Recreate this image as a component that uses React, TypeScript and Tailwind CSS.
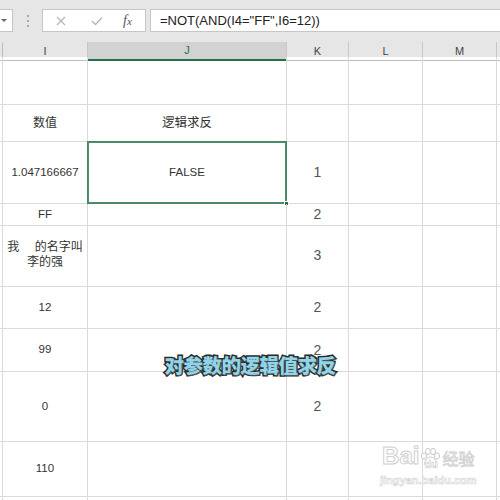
import React from "react"

const COLS = "grid grid-cols-[3px_85px_199px_62px_74px_74px_1fr]"
const FONT = "font-['Liberation_Sans','Noto_Sans_CJK_SC',sans-serif]"

type Row = { h: string; i?: React.ReactNode; j?: string; k?: string; sel?: boolean; cjk?: boolean }

const rows: Row[] = [
  { h: "h-[48px]" },
  { h: "h-[37px]", i: "数值", j: "逻辑求反", cjk: true },
  { h: "h-[62px]", i: "1.047166667", j: "FALSE", k: "1", sel: true },
  { h: "h-[20px]", i: "FF", k: "2" },
  {
    h: "h-[63px]",
    cjk: true,
    i: (
      <span className="block leading-[15px]">
        <span className="whitespace-pre">{"我\u3000 的名字叫"}</span>
        <br />
        李的强
      </span>
    ),
    k: "3",
  },
  { h: "h-[42px]", i: "12", k: "2" },
  { h: "h-[43px]", i: "99", k: "2" },
  { h: "h-[70px]", i: "0", k: "2" },
  { h: "h-[55px]", i: "110" },
  { h: "h-[20px]" },
]

const cell = "border-r border-b border-[#dadada] flex items-center justify-center text-center"

function Paw() {
  return (
    <svg width="22" height="22" viewBox="0 0 22 22" fill="#fff" stroke="#c9c9c9" strokeWidth="1">
      <ellipse cx="5" cy="9" rx="2.5" ry="3.2" />
      <ellipse cx="9" cy="4.5" rx="2.5" ry="3.2" />
      <ellipse cx="14" cy="4.5" rx="2.5" ry="3.2" />
      <ellipse cx="18" cy="9" rx="2.5" ry="3.2" />
      <path d="M11.5 10 C7 10 5 16 6 18 C7 20 9.5 19 11.5 19 C13.5 19 16 20 17 18 C18 16 16 10 11.5 10 Z" />
    </svg>
  )
}

export default function App() {
  return (
    <div className={`relative w-[500px] h-[500px] overflow-hidden bg-white ${FONT}`}>
      {/* formula bar */}
      <div className="flex h-[42px] items-start bg-[#e6e6e6] pt-[9px]">
        <div className="flex h-[23px] w-[13px] items-center border border-l-0 border-[#c6c6c6] bg-white pl-[1px]">
          <span className="block h-0 w-0 border-x-[3px] border-t-[3px] border-x-transparent border-t-[#666]" />
        </div>
        <div className="flex h-[23px] w-[29px] flex-col items-center justify-center gap-[3px]">
          <span className="h-[2px] w-[2px] bg-[#a8a8a8]" />
          <span className="h-[2px] w-[2px] bg-[#a8a8a8]" />
          <span className="h-[2px] w-[2px] bg-[#a8a8a8]" />
        </div>
        <div className="flex h-[23px] w-[104px] items-center border border-[#c6c6c6] bg-white">
          <svg className="ml-[13px]" width="10" height="10" viewBox="0 0 10 10" stroke="#b5b5b5" strokeWidth="1.2">
            <path d="M1 1 L9 9 M9 1 L1 9" />
          </svg>
          <svg className="ml-[25px]" width="12" height="10" viewBox="0 0 12 10" fill="none" stroke="#b5b5b5" strokeWidth="1.3">
            <path d="M1 5 L4.5 8.5 L11 1.5" />
          </svg>
          <span className="ml-[20px] font-['Liberation_Serif',serif] text-[14px] italic text-[#555]">
            f<span className="text-[11px]">x</span>
          </span>
        </div>
        <div className="ml-[4px] flex h-[23px] flex-1 items-center border border-r-0 border-[#c6c6c6] bg-white pl-[9px] text-[13px] text-[#222]">
          =NOT(AND(I4="FF",I6=12))
        </div>
      </div>

      {/* column headers */}
      <div className={`${COLS} h-[15px] bg-[#e6e6e6] text-[11px] text-[#444]`}>
        <div className="border-r border-b border-[#bdbdbd]" />
        <div className="flex items-center justify-center border-r border-b border-[#c8c8c8] border-b-[#bdbdbd]">I</div>
        <div className="flex items-center justify-center border-r border-b-2 border-[#c8c8c8] border-b-[#217346] bg-[#d2d2d2] text-[#217346]">J</div>
        <div className="flex items-center justify-center border-r border-b border-[#c8c8c8] border-b-[#bdbdbd]">K</div>
        <div className="flex items-center justify-center border-r border-b border-[#c8c8c8] border-b-[#bdbdbd]">L</div>
        <div className="flex items-center justify-center border-r border-b border-[#c8c8c8] border-b-[#bdbdbd]">M</div>
        <div className="border-b border-[#bdbdbd]" />
      </div>

      {/* rows */}
      {rows.map((r, idx) => (
        <div key={idx} className={`${COLS} ${r.h} text-[#333]`}>
          <div className="border-r border-b border-[#dadada]" />
          <div className={`${cell} ${r.cjk ? "text-[12px]" : "text-[11.5px]"}`}>{r.i}</div>
          <div className={`${cell} relative ${r.cjk ? "text-[12.5px]" : "text-[11.5px]"}`}>
            {r.j}
            {r.sel && (
              <>
                <span className="absolute -left-px -top-px right-[-1px] bottom-[-1px] border-2 border-[#217346]/80" />
                <span className="absolute right-[-3px] bottom-[-3px] h-[5px] w-[5px] border border-white bg-[#217346]" />
              </>
            )}
          </div>
          <div className={`${cell} text-[14px] text-[#555]`}>{r.k}</div>
          <div className={cell} />
          <div className={cell} />
          <div className="border-b border-[#dadada]" />
        </div>
      ))}

      {/* caption overlay */}
      <div className="absolute left-0 right-0 top-[352px] text-center font-['Noto_Sans_CJK_SC',sans-serif] text-[19.5px] font-black leading-[26px] tracking-[-0.5px] text-[#8fd5e9] [-webkit-text-stroke:3px_#2b2b2b] [paint-order:stroke_fill] [text-shadow:1px_1px_0_#555]">
        对参数的逻辑值求反
      </div>

      {/* watermark */}
      <div className="absolute left-[380px] top-[444px] flex flex-col items-center">
        <div className="flex items-end">
          <span className="font-['Liberation_Sans',sans-serif] text-[24px] font-bold leading-[24px] text-white [-webkit-text-stroke:1px_#cfcfcf]">Bai</span>
          <span className="relative -mb-[1px]">
            <Paw />
            <span className="absolute left-[5px] top-[9px] font-['Liberation_Sans',sans-serif] text-[11px] font-bold text-white [-webkit-text-stroke:0.6px_#cfcfcf]">du</span>
          </span>
          <span className="ml-[1px] font-['Noto_Sans_CJK_SC',sans-serif] text-[16px] leading-[20px] text-white [-webkit-text-stroke:0.8px_#cfcfcf]">经验</span>
        </div>
        <span className="mt-[4px] font-['Liberation_Sans',sans-serif] text-[11px] font-bold text-white [-webkit-text-stroke:0.6px_#d2d2d2]">jingyan.baidu.com</span>
      </div>
    </div>
  )
}
